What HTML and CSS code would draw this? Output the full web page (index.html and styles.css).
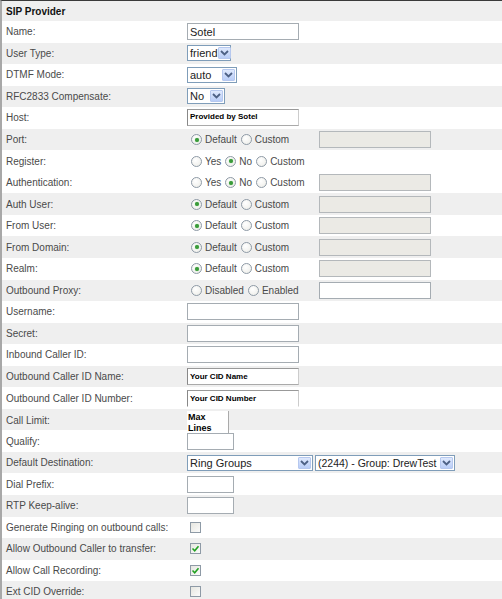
FILE: index.html
```html
<!DOCTYPE html>
<html>
<head>
<meta charset="utf-8">
<link rel="stylesheet" href="styles.css">
</head>
<body>
<div class="form">
  <div class="row head"><div class="lbl">SIP Provider</div></div>

  <div class="row w"><div class="lbl">Name:</div><div class="ctl"><span class="txt big">Sotel</span></div></div>
  <div class="row g"><div class="lbl">User Type:</div><div class="ctl"><span class="sel s-friend"><span class="val">friend</span><span class="arr"><svg width="9" height="6" viewBox="0 0 9 6"><path d="M1 1 L4.5 4.5 L8 1" fill="none" stroke="#4d6185" stroke-width="1.8"/></svg></span></span></div></div>
  <div class="row w"><div class="lbl">DTMF Mode:</div><div class="ctl"><span class="sel s-auto"><span class="val">auto</span><span class="arr"><svg width="9" height="6" viewBox="0 0 9 6"><path d="M1 1 L4.5 4.5 L8 1" fill="none" stroke="#4d6185" stroke-width="1.8"/></svg></span></span></div></div>
  <div class="row g"><div class="lbl">RFC2833 Compensate:</div><div class="ctl"><span class="sel s-no"><span class="val">No</span><span class="arr"><svg width="9" height="6" viewBox="0 0 9 6"><path d="M1 1 L4.5 4.5 L8 1" fill="none" stroke="#4d6185" stroke-width="1.8"/></svg></span></span></div></div>
  <div class="row w"><div class="lbl">Host:</div><div class="ctl"><span class="txt bold host">Provided by Sotel</span></div></div>

  <div class="row g"><div class="lbl">Port:</div><div class="ctl"><span class="radios"><span class="rad on"></span>Default<span class="rad"></span>Custom</span><span class="txt dis"></span></div></div>
  <div class="row w"><div class="lbl">Register:</div><div class="ctl"><span class="radios"><span class="rad"></span>Yes<span class="rad on"></span>No<span class="rad"></span>Custom</span></div></div>
  <div class="row w"><div class="lbl">Authentication:</div><div class="ctl"><span class="radios"><span class="rad"></span>Yes<span class="rad on"></span>No<span class="rad"></span>Custom</span><span class="txt dis"></span></div></div>
  <div class="row g"><div class="lbl">Auth User:</div><div class="ctl"><span class="radios"><span class="rad on"></span>Default<span class="rad"></span>Custom</span><span class="txt dis"></span></div></div>
  <div class="row w"><div class="lbl">From User:</div><div class="ctl"><span class="radios"><span class="rad on"></span>Default<span class="rad"></span>Custom</span><span class="txt dis"></span></div></div>
  <div class="row g"><div class="lbl">From Domain:</div><div class="ctl"><span class="radios"><span class="rad on"></span>Default<span class="rad"></span>Custom</span><span class="txt dis"></span></div></div>
  <div class="row w"><div class="lbl">Realm:</div><div class="ctl"><span class="radios"><span class="rad on"></span>Default<span class="rad"></span>Custom</span><span class="txt dis"></span></div></div>
  <div class="row g"><div class="lbl">Outbound Proxy:</div><div class="ctl"><span class="radios"><span class="rad"></span>Disabled<span class="rad"></span>Enabled</span><span class="txt"></span></div></div>

  <div class="row w"><div class="lbl">Username:</div><div class="ctl"><span class="txt"></span></div></div>
  <div class="row g"><div class="lbl">Secret:</div><div class="ctl"><span class="txt"></span></div></div>
  <div class="row w"><div class="lbl">Inbound Caller ID:</div><div class="ctl"><span class="txt"></span></div></div>
  <div class="row g"><div class="lbl">Outbound Caller ID Name:</div><div class="ctl"><span class="txt bold">Your CID Name</span></div></div>
  <div class="row w"><div class="lbl">Outbound Caller ID Number:</div><div class="ctl"><span class="txt bold cidnum">Your CID Number</span></div></div>
  <div class="row g"><div class="lbl">Call Limit:</div><div class="ctl"><span class="maxbox">Max<br>Lines</span></div></div>
  <div class="row w"><div class="lbl">Qualify:</div><div class="ctl"><span class="txt small"></span></div></div>
  <div class="row g"><div class="lbl">Default Destination:</div><div class="ctl"><span class="sel s-ring"><span class="val">Ring Groups</span><span class="arr"><svg width="9" height="6" viewBox="0 0 9 6"><path d="M1 1 L4.5 4.5 L8 1" fill="none" stroke="#4d6185" stroke-width="1.8"/></svg></span></span><span class="sel s-grp"><span class="val">(2244) - Group: DrewTest</span><span class="arr"><svg width="9" height="6" viewBox="0 0 9 6"><path d="M1 1 L4.5 4.5 L8 1" fill="none" stroke="#4d6185" stroke-width="1.8"/></svg></span></span></div></div>
  <div class="row w"><div class="lbl">Dial Prefix:</div><div class="ctl"><span class="txt small"></span></div></div>
  <div class="row g"><div class="lbl">RTP Keep-alive:</div><div class="ctl"><span class="txt small"></span></div></div>
  <div class="row w"><div class="lbl">Generate Ringing on outbound calls:</div><div class="ctl"><span class="chk"></span></div></div>
  <div class="row g"><div class="lbl">Allow Outbound Caller to transfer:</div><div class="ctl"><span class="chk"><svg width="9" height="9" viewBox="0 0 9 9"><path d="M1.5 4.5 L3.7 6.7 L7.5 2.2" fill="none" stroke="#21a121" stroke-width="1.6"/></svg></span></div></div>
  <div class="row w"><div class="lbl">Allow Call Recording:</div><div class="ctl"><span class="chk"><svg width="9" height="9" viewBox="0 0 9 9"><path d="M1.5 4.5 L3.7 6.7 L7.5 2.2" fill="none" stroke="#21a121" stroke-width="1.6"/></svg></span></div></div>
  <div class="row g"><div class="lbl">Ext CID Override:</div><div class="ctl"><span class="chk"></span></div></div>
</div>
</body>
</html>
```
FILE: styles.css
```css
html, body {
  margin: 0;
  padding: 0;
  background: #ffffff;
}
body {
  font-family: "Liberation Sans", Arial, sans-serif;
  font-size: 10px;
  color: #4a4a4a;
  overflow: hidden;
}
.form {
  width: 502px;
  border-top: 1px solid #3a3a3a;
  border-left: 2px solid #a8a8a8;
  box-sizing: border-box;
}
.row {
  display: grid;
  grid-template-columns: 185px 1fr;
  align-items: center;
  height: 21.55px;
}
.row.g, .row.head { background: #efefef; }
.row.w { background: #ffffff; }
.row.head { height: 20px; }
.head .lbl {
  font-weight: bold;
  font-size: 10px;
  color: #111;
  padding-left: 4px;
}
.lbl {
  padding-left: 4px;
  white-space: nowrap;
}
.ctl {
  display: flex;
  align-items: center;
  height: 100%;
}
.txt {
  display: inline-flex;
  align-items: center;
  box-sizing: border-box;
  width: 112px;
  height: 17px;
  border: 1px solid #a5acb2;
  background: #fff;
  padding-left: 2px;
  color: #222;
}
.txt.big { font-size: 11px; }
.txt.bold {
  font-weight: bold;
  font-size: 8px;
  color: #000;
  border-color: #999 #ccc #aaa #888;
}
.txt.host { align-items: flex-start; padding-top: 2px; }
.txt.cidnum { border-bottom-color: #fff; }
.txt.small { width: 47px; }
.txt.dis {
  background: #ebeae5;
  border-color: #b4b8bb;
}
.radios {
  display: inline-flex;
  align-items: center;
  width: 132px;
  color: #4a4a4a;
}
.rad {
  display: inline-block;
  box-sizing: border-box;
  width: 11px;
  height: 11px;
  border: 1px solid #8e9aa6;
  border-radius: 50%;
  background: radial-gradient(circle at 40% 35%, #ffffff 0%, #ebebe6 100%);
  margin: 0 3px 0 4px;
  position: relative;
}
.rad.on::after {
  content: "";
  position: absolute;
  left: 2.5px;
  top: 2.5px;
  width: 4px;
  height: 4px;
  border-radius: 50%;
  background: #3a9a3a;
  box-shadow: 0 0 1px #5fbf5f;
}
.sel {
  display: inline-flex;
  align-items: center;
  justify-content: space-between;
  box-sizing: border-box;
  height: 16px;
  border: 1px solid #7f9db9;
  background: #fff;
  font-size: 11px;
  color: #222;
  padding-left: 2px;
  padding-right: 1px;
}
.sel .val { white-space: nowrap; }
.arr {
  display: inline-flex;
  align-items: center;
  justify-content: center;
  flex: none;
  width: 13px;
  height: 12px;
  background: linear-gradient(#dfe9fd, #b9cdf7);
  border: 1px solid #b6c8ef;
  box-sizing: border-box;
  border-radius: 1px;
}
.s-friend { width: 44px; }
.s-auto { width: 50px; }
.s-no { width: 38px; }
.s-ring { width: 126px; margin-right: 2px; }
.s-grp { width: 140px; font-size: 10.5px; }
.maxbox {
  display: block;
  align-self: flex-start;
  margin-top: 2px;
  width: 42px;
  height: 22px;
  box-sizing: border-box;
  background: #fff;
  border-right: 1px solid #aaa;
  font-weight: bold;
  font-size: 9px;
  line-height: 11px;
  color: #000;
  padding-left: 1px;
  padding-top: 1px;
  position: relative;
  z-index: 1;
}
.chk {
  display: inline-flex;
  align-items: center;
  justify-content: center;
  box-sizing: border-box;
  width: 11px;
  height: 11px;
  border: 1px solid #8e9aa6;
  background: linear-gradient(135deg, #e6e6e0, #fbfbfb);
  margin-left: 3px;
}
```
